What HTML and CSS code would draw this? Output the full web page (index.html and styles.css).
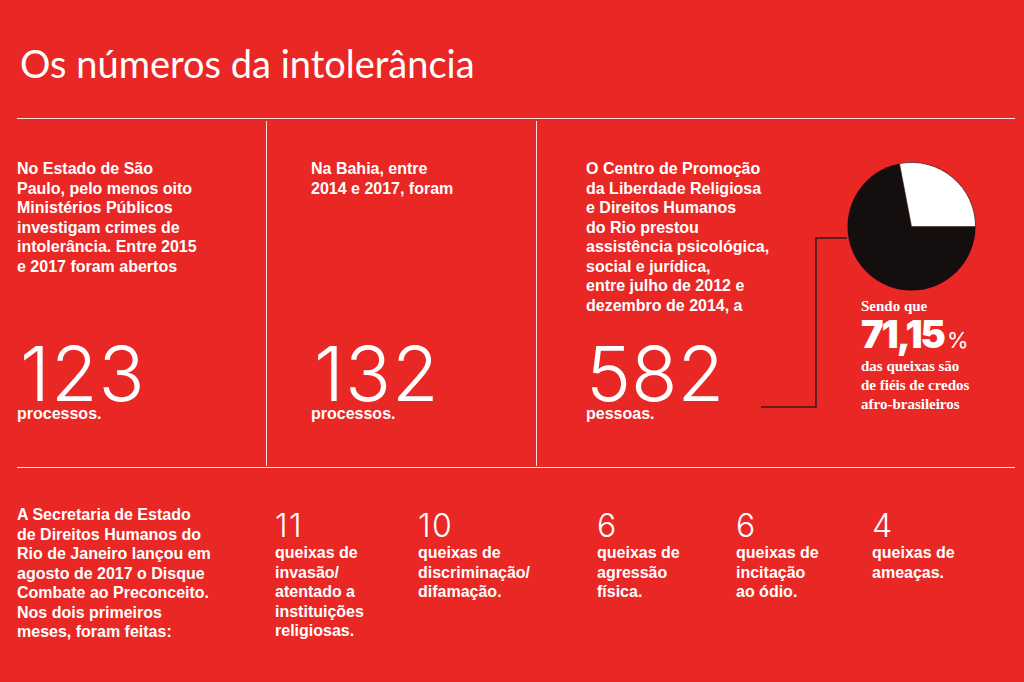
FILE: index.html
```html
<!DOCTYPE html>
<html lang="pt">
<head>
<meta charset="utf-8">
<title>Os números da intolerância</title>
<link rel="stylesheet" href="styles.css">
</head>
<body>
<div class="page">
  <h1 class="title">Os números da intolerância</h1>

  <section class="top-row">
    <div class="col col-sp">
      <p class="text">No Estado de São<br>Paulo, pelo menos oito<br>Ministérios Públicos<br>investigam crimes de<br>intolerância. Entre 2015<br>e 2017 foram abertos</p>
      <div class="stat">
        <div class="big">123</div>
        <div class="label">processos.</div>
      </div>
    </div>
    <div class="col col-ba">
      <p class="text">Na Bahia, entre<br>2014 e 2017, foram</p>
      <div class="stat">
        <div class="big">132</div>
        <div class="label">processos.</div>
      </div>
    </div>
    <div class="col col-rj">
      <div class="rj-left">
        <p class="text">O Centro de Promoção<br>da Liberdade Religiosa<br>e Direitos Humanos<br>do Rio prestou<br>assistência psicológica,<br>social e jurídica,<br>entre julho de 2012 e<br>dezembro de 2014, a</p>
        <div class="stat">
          <div class="big big-582">582</div>
          <div class="label">pessoas.</div>
        </div>
      </div>
      <div class="rj-pie">
        <svg class="pie" width="129" height="129" viewBox="0 0 129 129">
          <circle cx="64.5" cy="64.5" r="64" fill="#140e0e"/>
          <path d="M64.5 64.5 L52.5 1.6 A64 64 0 0 1 128.5 64.5 Z" fill="#ffffff" stroke="#3a1a1a" stroke-width="0.6"/>
        </svg>
        <p class="pie-note">Sendo que</p>
        <p class="pie-pct"><span class="pct-num">71,15</span><span class="pct-sign">%</span></p>
        <p class="pie-note">das queixas são<br>de fiéis de credos<br>afro-brasileiros</p>
      </div>
      <svg class="connector" width="90" height="175" viewBox="0 0 90 175">
        <polyline points="86,1 55,1 55,170 0,170" fill="none" stroke="#3a1a1a" stroke-width="1.5"/>
      </svg>
    </div>
  </section>

  <section class="bottom-row">
    <p class="text intro">A Secretaria de Estado<br>de Direitos Humanos do<br>Rio de Janeiro lançou em<br>agosto de 2017 o Disque<br>Combate ao Preconceito.<br>Nos dois primeiros<br>meses, foram feitas:</p>
    <div class="item">
      <div class="num">11</div>
      <p class="text">queixas de<br>invasão/<br>atentado a<br>instituições<br>religiosas.</p>
    </div>
    <div class="item">
      <div class="num">10</div>
      <p class="text">queixas de<br>discriminação/<br>difamação.</p>
    </div>
    <div class="item">
      <div class="num">6</div>
      <p class="text">queixas de<br>agressão<br>física.</p>
    </div>
    <div class="item">
      <div class="num">6</div>
      <p class="text">queixas de<br>incitação<br>ao ódio.</p>
    </div>
    <div class="item">
      <div class="num">4</div>
      <p class="text">queixas de<br>ameaças.</p>
    </div>
  </section>
</div>
</body>
</html>
```

FILE: styles.css
```css
html, body {
  margin: 0;
  padding: 0;
}
body {
  background: #e92725;
  color: #ffffff;
  width: 1024px;
  height: 682px;
  overflow: hidden;
  font-family: "Liberation Sans", Arial, sans-serif;
}
.page {
  padding: 0 9px 0 17px;
}
.title {
  margin: 0;
  padding: 41px 0 0 3px;
  height: 80px;
  box-sizing: border-box;
  font-family: Lato, "Open Sans", sans-serif;
  font-weight: 400;
  font-size: 38px;
  line-height: 44px;
  letter-spacing: 0;
}
p {
  margin: 0;
}
.text {
  font-family: "Liberation Sans", Arial, sans-serif;
  font-weight: 700;
  font-size: 16px;
  line-height: 19.5px;
}

/* top row */
.top-row {
  margin-top: 38px;
  border-top: 1.5px solid rgba(255, 240, 238, 0.92);
  border-bottom: 1.5px solid rgba(255, 240, 238, 0.92);
  height: 350px;
  box-sizing: border-box;
  padding: 2px 0 1px;
  display: grid;
  grid-template-columns: 249px 270px 1fr;
}
.col {
  display: flex;
  flex-direction: column;
  padding: 38px 0 43px;
}
.col-ba, .col-rj {
  border-left: 1.5px solid rgba(255, 240, 238, 0.92);
}
.col-ba {
  padding-left: 44px;
}
.col-rj {
  padding-left: 49px;
  flex-direction: row;
  position: relative;
}
.rj-left {
  width: 225px;
  display: flex;
  flex-direction: column;
}
.stat {
  margin-top: auto;
}
.big {
  font-family: Inter, Lato, sans-serif;
  font-weight: 350;
  font-size: 76px;
  line-height: 62px;
  letter-spacing: 1px;
  margin-left: 3px;
}
.big-582 {
  margin-left: 0;
  letter-spacing: 0;
}
.label {
  font-family: "Liberation Sans", Arial, sans-serif;
  font-weight: 700;
  font-size: 16px;
  line-height: 19.5px;
}

.rj-pie {
  margin-left: 36px;
  display: flex;
  flex-direction: column;
}
.pie {
  display: block;
  margin-top: 3px;
}
.pie-note {
  font-family: "Liberation Serif", "DejaVu Serif", serif;
  font-weight: 700;
  font-size: 15px;
  line-height: 19px;
  margin-left: 14px;
}
.pie-note:first-of-type {
  margin-top: 6px;
}
.pie-pct {
  margin-left: 14px;
  line-height: 34px;
  margin-top: 1px;
  margin-bottom: -3px;
}
.pct-num {
  font-family: Inter, Roboto, sans-serif;
  font-weight: 900;
  font-size: 38px;
  letter-spacing: -2px;
}
.pct-sign {
  font-family: Inter, Roboto, sans-serif;
  font-weight: 400;
  font-size: 22px;
  margin-left: 3px;
}
.connector {
  position: absolute;
  left: 224px;
  top: 116px;
}

/* bottom row */
.bottom-row {
  display: grid;
  grid-template-columns: 258px 143px 179px 139px 136px 1fr;
  padding-top: 37px;
}
.item .num {
  font-family: Inter, Lato, sans-serif;
  font-weight: 350;
  font-size: 32px;
  line-height: 34px;
  letter-spacing: 1.5px;
  margin-top: 4px;
}
```
